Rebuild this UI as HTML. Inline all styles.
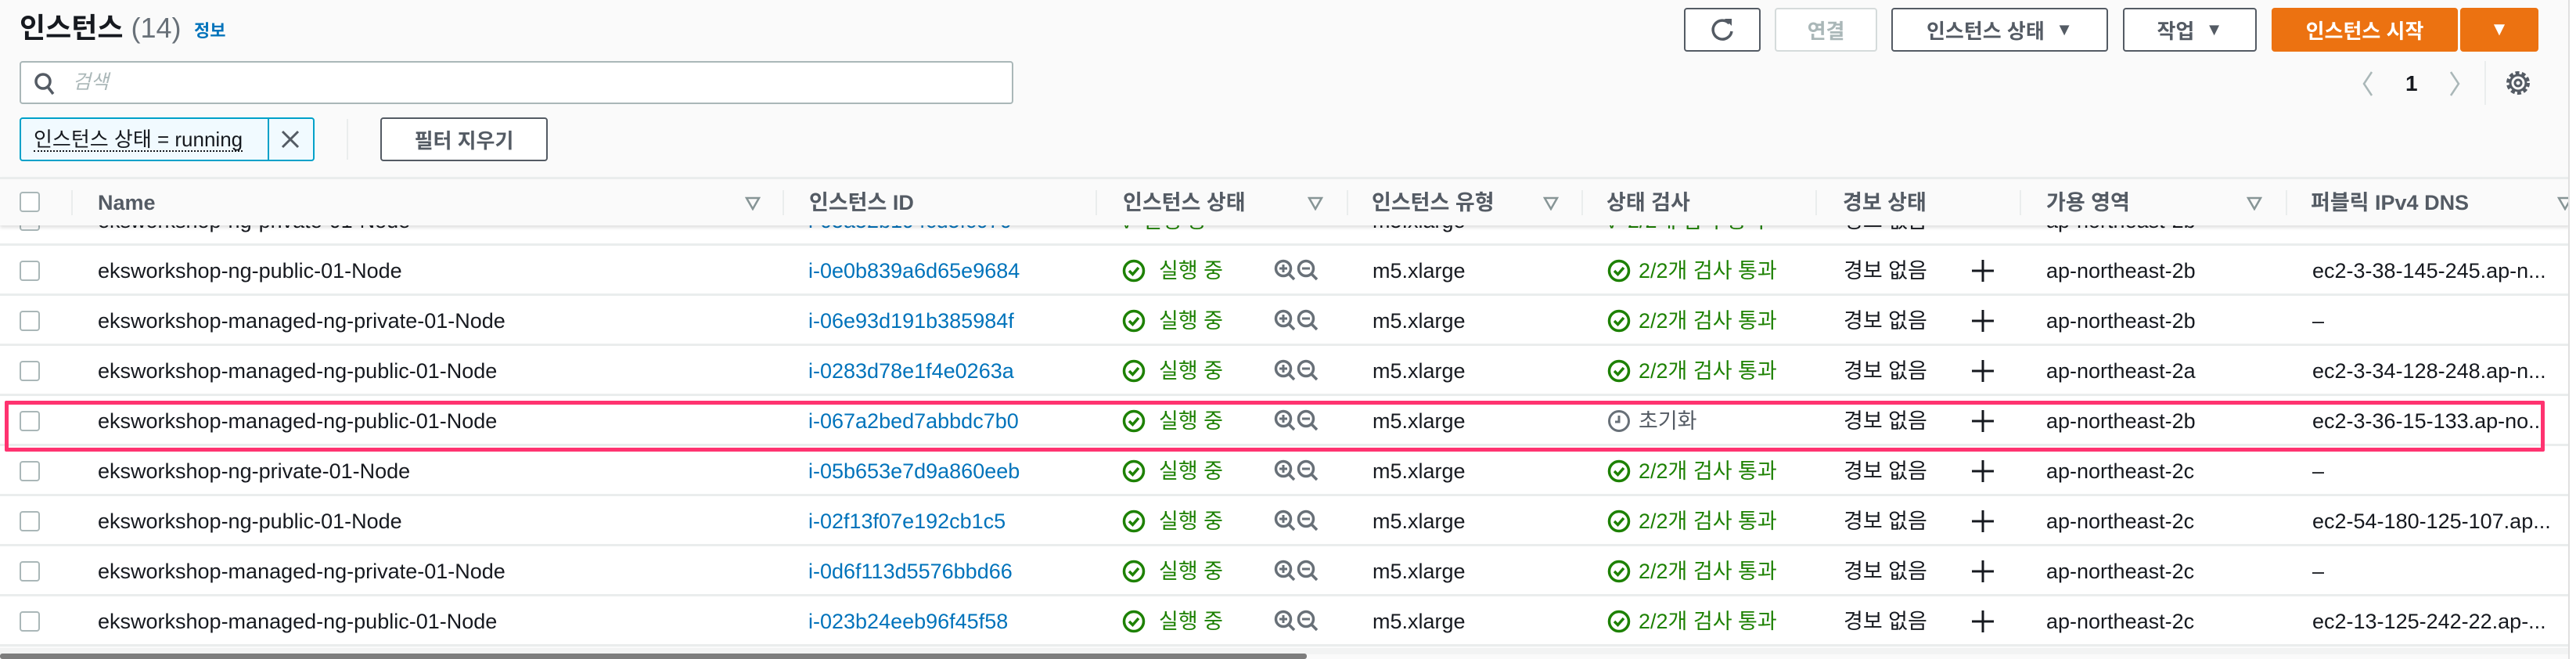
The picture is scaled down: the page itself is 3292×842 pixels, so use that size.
<!DOCTYPE html>
<html><head><meta charset="utf-8"><style>
*{box-sizing:border-box;margin:0;padding:0}
body{width:3292px;height:842px;overflow:hidden;background:#fff;font-family:"Liberation Sans","Noto Sans CJK KR",sans-serif;color:#16191f;position:relative}
.wrap{position:absolute;left:0;top:0;width:3284px;height:842px;background:#fafafa;border-right:2px solid #e0e0e0;overflow:hidden}
.a{position:absolute;white-space:nowrap}
.btn{position:absolute;top:10px;height:56px;border:2px solid #545b64;border-radius:4px;background:#fff;font-weight:bold;font-size:26px;color:#545b64;display:flex;align-items:center;justify-content:center}
.row{position:absolute;left:0;width:3284px;height:64px;background:#fff;border-bottom:3px solid #eaeded;font-size:27px;line-height:64px}
.row .a{top:0}
.cb{position:absolute;left:25px;top:19px;width:26px;height:26px;border:2px solid #aab7b8;border-radius:4px;background:#fff}
.link{color:#0073bb}
.grn{color:#1d8102}
.hdr{position:absolute;left:0;top:226px;width:3284px;height:62px;background:#fafafa;border-top:3px solid #eaeded;z-index:5;box-shadow:0 3px 4px rgba(0,0,0,.12);font-size:27px;font-weight:bold;color:#545b64;line-height:60px}
.hdr .a{top:0}
.div{position:absolute;top:14px;width:2px;height:32px;background:#eaeded}
.tri{position:absolute;top:22px}
</style></head><body>
<div class="wrap">
<div class="a" style="left:25px;top:10px;font-size:36px;font-weight:bold;line-height:52px">인스턴스 <span style="font-weight:normal;color:#687078">(14)</span></div>
<div class="a" style="left:248px;top:22px;font-size:22px;font-weight:bold;color:#0073bb;line-height:36px">정보</div>

<div class="a" style="left:25px;top:78px;width:1270px;height:55px;border:2px solid #aab7b8;border-radius:4px;background:#fff">
<svg style="position:absolute;left:16px;top:12px" width="28" height="30" viewBox="0 0 28 30"><circle cx="12" cy="12" r="9" fill="none" stroke="#545b64" stroke-width="3.5"/><line x1="18" y1="19" x2="25" y2="28" stroke="#545b64" stroke-width="3.5"/></svg>
<span class="a" style="left:66px;top:0;line-height:51px;font-size:25px;font-style:italic;color:#aab7b8">검색</span></div>

<div class="a" style="left:25px;top:150px;width:377px;height:56px;border:2px solid #00a1c9;border-radius:4px;background:#f1faff">
<span class="a" style="left:16px;top:12px;font-size:26px;line-height:28px;border-bottom:2px dotted #16191f">인스턴스 상태 = running</span>
<div class="a" style="left:315px;top:0;width:2px;height:52px;background:#00a1c9"></div>
<svg style="position:absolute;left:331px;top:13px" width="26" height="26"><path d="M3 3L23 23M23 3L3 23" stroke="#545b64" stroke-width="3"/></svg></div>
<div class="a" style="left:443px;top:152px;width:2px;height:52px;background:#eaeded"></div>
<div class="btn" style="left:486px;top:150px;width:214px">필터 지우기</div>

<div class="btn" style="left:2152px;width:98px"><svg width="34" height="34" viewBox="0 0 34 34"><path d="M26 9A12 12 0 1 0 29 19" fill="none" stroke="#545b64" stroke-width="3.5"/><path d="M20 3L29 3L29 12Z" fill="#545b64"/></svg></div>
<div class="btn" style="left:2268px;width:131px;border-color:#d5dbdb;color:#aab7b8">연결</div>
<div class="btn" style="left:2417px;width:277px">인스턴스 상태 &nbsp;<span style="font-size:22px">▼</span></div>
<div class="btn" style="left:2713px;width:171px">작업 &nbsp;<span style="font-size:22px">▼</span></div>
<div class="btn" style="left:2903px;width:238px;background:#ec7211;border-color:#ec7211;color:#fff">인스턴스 시작</div>
<div class="btn" style="left:3144px;width:100px;background:#ec7211;border-color:#ec7211;color:#fff;font-size:24px">▼</div>

<svg style="position:absolute;left:3018px;top:90px" width="16" height="34"><path d="M13 2L3 17L13 32" fill="none" stroke="#aab7b8" stroke-width="2.5"/></svg>
<div class="a" style="left:3074px;top:88px;font-size:28px;font-weight:bold;line-height:38px">1</div>
<svg style="position:absolute;left:3129px;top:90px" width="16" height="34"><path d="M3 2L13 17L3 32" fill="none" stroke="#aab7b8" stroke-width="2.5"/></svg>
<div class="a" style="left:3175px;top:78px;width:2px;height:56px;background:#eaeded"></div>
<svg style="position:absolute;left:3200px;top:88px" width="36" height="36" viewBox="0 0 36 36"><circle cx="18" cy="18" r="13" fill="none" stroke="#545b64" stroke-width="4" stroke-dasharray="5 3.2"/><circle cx="18" cy="18" r="10" fill="none" stroke="#545b64" stroke-width="3"/><circle cx="18" cy="18" r="4" fill="none" stroke="#545b64" stroke-width="3"/></svg>

<div class="row" style="top:250px">
<div class="cb"></div>
<span class="a" style="left:125px">eksworkshop-ng-private-01-Node</span>
<span class="a link" style="left:1033px">i-05a52b194cd5fc070</span>
<span class="a grn" style="left:1434px">✓ 실행 중</span>
<span class="a" style="left:1754px">m5.xlarge</span>
<span class="a grn" style="left:2054px">✓ 2/2개 검사 통과</span>
<span class="a" style="left:2356px">경보 없음</span>
<span class="a" style="left:2615px">ap-northeast-2b</span>
</div>

<div class="hdr">
<div class="cb" style="top:16px"></div>
<div class="div" style="left:91px"></div>
<span class="a" style="left:125px">Name</span>
<svg class="tri" style="left:952px" width="20" height="18"><path d="M2 2H18L10 16Z" fill="none" stroke="#879596" stroke-width="2.5"/></svg>
<div class="div" style="left:1000px"></div>
<span class="a" style="left:1034px">인스턴스 ID</span>
<div class="div" style="left:1400px"></div>
<span class="a" style="left:1435px">인스턴스 상태</span>
<svg class="tri" style="left:1671px" width="20" height="18"><path d="M2 2H18L10 16Z" fill="none" stroke="#879596" stroke-width="2.5"/></svg>
<div class="div" style="left:1721px"></div>
<span class="a" style="left:1753px">인스턴스 유형</span>
<svg class="tri" style="left:1972px" width="20" height="18"><path d="M2 2H18L10 16Z" fill="none" stroke="#879596" stroke-width="2.5"/></svg>
<div class="div" style="left:2021px"></div>
<span class="a" style="left:2053px">상태 검사</span>
<div class="div" style="left:2320px"></div>
<span class="a" style="left:2355px">경보 상태</span>
<div class="div" style="left:2581px"></div>
<span class="a" style="left:2615px">가용 영역</span>
<svg class="tri" style="left:2871px" width="20" height="18"><path d="M2 2H18L10 16Z" fill="none" stroke="#879596" stroke-width="2.5"/></svg>
<div class="div" style="left:2921px"></div>
<span class="a" style="left:2953px">퍼블릭 IPv4 DNS</span>
<svg class="tri" style="left:3268px" width="20" height="18"><path d="M2 2H18L10 16Z" fill="none" stroke="#879596" stroke-width="2.5"/></svg>
</div>

<svg width="0" height="0" style="position:absolute"><defs>
<g id="ok"><circle cx="15" cy="15" r="12.5" fill="none" stroke="#1d8102" stroke-width="3.5"/><path d="M9 15L13.5 19.5L21 11" fill="none" stroke="#1d8102" stroke-width="3.5"/></g>
<g id="zm"><circle cx="12" cy="12" r="9.5" fill="none" stroke="#687078" stroke-width="3.5"/><path d="M7 12H17M12 7V17" stroke="#687078" stroke-width="3"/><path d="M19 19L26 26" stroke="#687078" stroke-width="3.5"/>
<g transform="translate(29,0)"><circle cx="12" cy="12" r="9.5" fill="none" stroke="#687078" stroke-width="3.5"/><path d="M7 12H17" stroke="#687078" stroke-width="3"/><path d="M19 19L26 26" stroke="#687078" stroke-width="3.5"/></g></g>
<g id="pl"><path d="M14 0V28M0 14H28" stroke="#16191f" stroke-width="3"/></g>
</defs></svg>

<div class="row" style="top:314px"><div class="cb"></div><span class="a" style="left:125px">eksworkshop-ng-public-01-Node</span><span class="a link" style="left:1033px">i-0e0b839a6d65e9684</span><svg class="a" style="left:1434px;top:17px" width="30" height="30"><use href="#ok"/></svg><span class="a grn" style="left:1481px">실행 중</span><svg class="a" style="left:1628px;top:17px" width="60" height="30"><use href="#zm"/></svg><span class="a" style="left:1754px">m5.xlarge</span><svg class="a" style="left:2054px;top:17px" width="30" height="30"><use href="#ok"/></svg><span class="a grn" style="left:2094px">2/2개 검사 통과</span><span class="a" style="left:2356px">경보 없음</span><svg class="a" style="left:2520px;top:18px" width="28" height="28"><use href="#pl"/></svg><span class="a" style="left:2615px">ap-northeast-2b</span><span class="a" style="left:2955px">ec2-3-38-145-245.ap-n...</span></div>

<div class="row" style="top:378px"><div class="cb"></div><span class="a" style="left:125px">eksworkshop-managed-ng-private-01-Node</span><span class="a link" style="left:1033px">i-06e93d191b385984f</span><svg class="a" style="left:1434px;top:17px" width="30" height="30"><use href="#ok"/></svg><span class="a grn" style="left:1481px">실행 중</span><svg class="a" style="left:1628px;top:17px" width="60" height="30"><use href="#zm"/></svg><span class="a" style="left:1754px">m5.xlarge</span><svg class="a" style="left:2054px;top:17px" width="30" height="30"><use href="#ok"/></svg><span class="a grn" style="left:2094px">2/2개 검사 통과</span><span class="a" style="left:2356px">경보 없음</span><svg class="a" style="left:2520px;top:18px" width="28" height="28"><use href="#pl"/></svg><span class="a" style="left:2615px">ap-northeast-2b</span><span class="a" style="left:2955px">–</span></div>

<div class="row" style="top:442px"><div class="cb"></div><span class="a" style="left:125px">eksworkshop-managed-ng-public-01-Node</span><span class="a link" style="left:1033px">i-0283d78e1f4e0263a</span><svg class="a" style="left:1434px;top:17px" width="30" height="30"><use href="#ok"/></svg><span class="a grn" style="left:1481px">실행 중</span><svg class="a" style="left:1628px;top:17px" width="60" height="30"><use href="#zm"/></svg><span class="a" style="left:1754px">m5.xlarge</span><svg class="a" style="left:2054px;top:17px" width="30" height="30"><use href="#ok"/></svg><span class="a grn" style="left:2094px">2/2개 검사 통과</span><span class="a" style="left:2356px">경보 없음</span><svg class="a" style="left:2520px;top:18px" width="28" height="28"><use href="#pl"/></svg><span class="a" style="left:2615px">ap-northeast-2a</span><span class="a" style="left:2955px">ec2-3-34-128-248.ap-n...</span></div>

<div class="row" style="top:506px"><div class="cb"></div><span class="a" style="left:125px">eksworkshop-managed-ng-public-01-Node</span><span class="a link" style="left:1033px">i-067a2bed7abbdc7b0</span><svg class="a" style="left:1434px;top:17px" width="30" height="30"><use href="#ok"/></svg><span class="a grn" style="left:1481px">실행 중</span><svg class="a" style="left:1628px;top:17px" width="60" height="30"><use href="#zm"/></svg><span class="a" style="left:1754px">m5.xlarge</span><svg class="a" style="left:2054px;top:17px" width="30" height="30"><circle cx="15" cy="15" r="12.5" fill="none" stroke="#687078" stroke-width="3"/><path d="M15 8V16H10" fill="none" stroke="#687078" stroke-width="3"/></svg><span class="a" style="left:2094px;color:#545b64">초기화</span><span class="a" style="left:2356px">경보 없음</span><svg class="a" style="left:2520px;top:18px" width="28" height="28"><use href="#pl"/></svg><span class="a" style="left:2615px">ap-northeast-2b</span><span class="a" style="left:2955px">ec2-3-36-15-133.ap-no...</span></div>

<div class="row" style="top:570px"><div class="cb"></div><span class="a" style="left:125px">eksworkshop-ng-private-01-Node</span><span class="a link" style="left:1033px">i-05b653e7d9a860eeb</span><svg class="a" style="left:1434px;top:17px" width="30" height="30"><use href="#ok"/></svg><span class="a grn" style="left:1481px">실행 중</span><svg class="a" style="left:1628px;top:17px" width="60" height="30"><use href="#zm"/></svg><span class="a" style="left:1754px">m5.xlarge</span><svg class="a" style="left:2054px;top:17px" width="30" height="30"><use href="#ok"/></svg><span class="a grn" style="left:2094px">2/2개 검사 통과</span><span class="a" style="left:2356px">경보 없음</span><svg class="a" style="left:2520px;top:18px" width="28" height="28"><use href="#pl"/></svg><span class="a" style="left:2615px">ap-northeast-2c</span><span class="a" style="left:2955px">–</span></div>

<div class="row" style="top:634px"><div class="cb"></div><span class="a" style="left:125px">eksworkshop-ng-public-01-Node</span><span class="a link" style="left:1033px">i-02f13f07e192cb1c5</span><svg class="a" style="left:1434px;top:17px" width="30" height="30"><use href="#ok"/></svg><span class="a grn" style="left:1481px">실행 중</span><svg class="a" style="left:1628px;top:17px" width="60" height="30"><use href="#zm"/></svg><span class="a" style="left:1754px">m5.xlarge</span><svg class="a" style="left:2054px;top:17px" width="30" height="30"><use href="#ok"/></svg><span class="a grn" style="left:2094px">2/2개 검사 통과</span><span class="a" style="left:2356px">경보 없음</span><svg class="a" style="left:2520px;top:18px" width="28" height="28"><use href="#pl"/></svg><span class="a" style="left:2615px">ap-northeast-2c</span><span class="a" style="left:2955px">ec2-54-180-125-107.ap...</span></div>

<div class="row" style="top:698px"><div class="cb"></div><span class="a" style="left:125px">eksworkshop-managed-ng-private-01-Node</span><span class="a link" style="left:1033px">i-0d6f113d5576bbd66</span><svg class="a" style="left:1434px;top:17px" width="30" height="30"><use href="#ok"/></svg><span class="a grn" style="left:1481px">실행 중</span><svg class="a" style="left:1628px;top:17px" width="60" height="30"><use href="#zm"/></svg><span class="a" style="left:1754px">m5.xlarge</span><svg class="a" style="left:2054px;top:17px" width="30" height="30"><use href="#ok"/></svg><span class="a grn" style="left:2094px">2/2개 검사 통과</span><span class="a" style="left:2356px">경보 없음</span><svg class="a" style="left:2520px;top:18px" width="28" height="28"><use href="#pl"/></svg><span class="a" style="left:2615px">ap-northeast-2c</span><span class="a" style="left:2955px">–</span></div>

<div class="row" style="top:762px"><div class="cb"></div><span class="a" style="left:125px">eksworkshop-managed-ng-public-01-Node</span><span class="a link" style="left:1033px">i-023b24eeb96f45f58</span><svg class="a" style="left:1434px;top:17px" width="30" height="30"><use href="#ok"/></svg><span class="a grn" style="left:1481px">실행 중</span><svg class="a" style="left:1628px;top:17px" width="60" height="30"><use href="#zm"/></svg><span class="a" style="left:1754px">m5.xlarge</span><svg class="a" style="left:2054px;top:17px" width="30" height="30"><use href="#ok"/></svg><span class="a grn" style="left:2094px">2/2개 검사 통과</span><span class="a" style="left:2356px">경보 없음</span><svg class="a" style="left:2520px;top:18px" width="28" height="28"><use href="#pl"/></svg><span class="a" style="left:2615px">ap-northeast-2c</span><span class="a" style="left:2955px">ec2-13-125-242-22.ap-...</span></div>

<div class="a" style="left:0;top:828px;width:3284px;height:8px;background:#f2f3f3"></div>
<div class="a" style="left:0;top:835px;width:1670px;height:7px;background:#7d7d7d;border-radius:3px"></div>

<div class="a" style="left:6px;top:512px;width:3246px;height:65px;border:5px solid #ff3370;border-radius:2px;z-index:6"></div>
</div>
</body></html>
